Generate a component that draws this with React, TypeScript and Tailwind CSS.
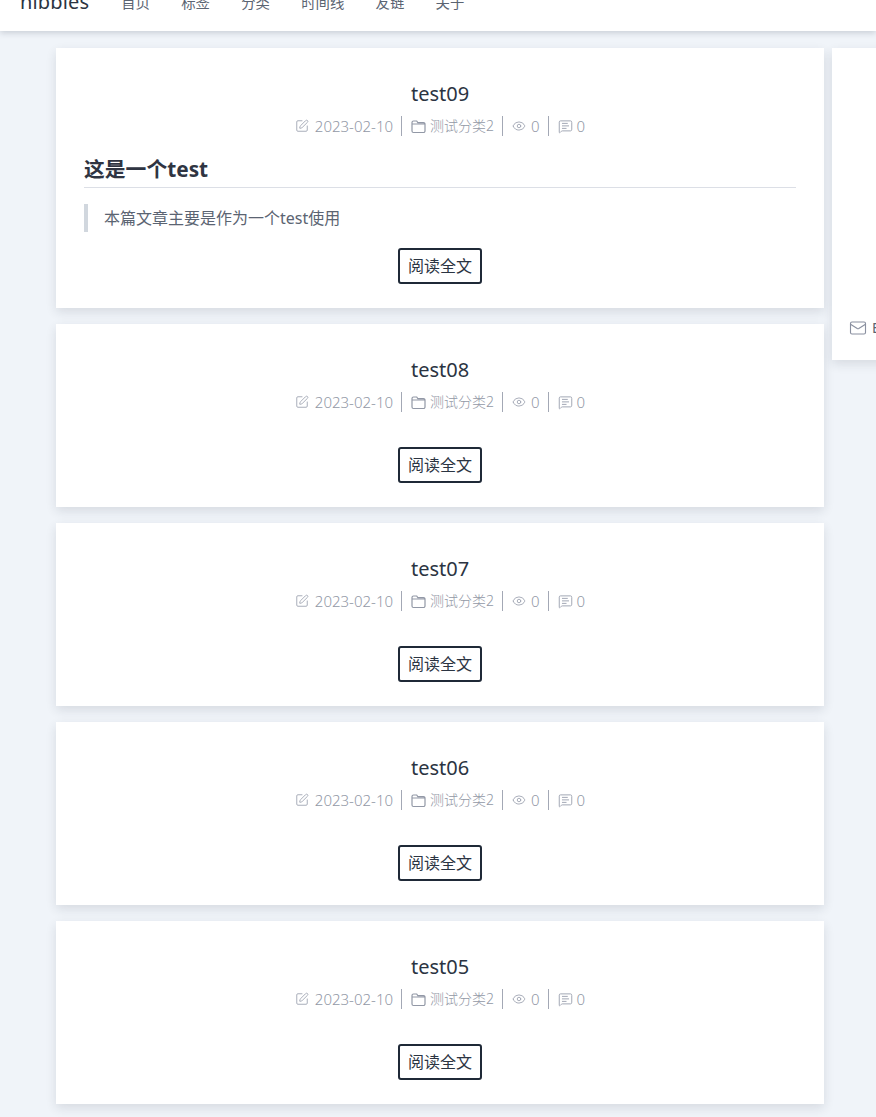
import type { ReactNode } from 'react'
import { Eye, Mail, MessageSquareText, SquarePen } from 'lucide-react'

const navItems = ['首页', '标签', '分类', '时间线', '友链', '关于']

const fontStack = "font-['Noto_Sans','Noto_Sans_CJK_SC',sans-serif]"

function FolderIcon() {
  return (
    <svg width="15" height="15" viewBox="0 0 15 15" fill="none" stroke="currentColor" strokeWidth="1.2">
      <path d="M1 3.5A1.5 1.5 0 0 1 2.5 2h3.2l1.1 1.6h5.7A1.5 1.5 0 0 1 14 5.1v6.9a1.5 1.5 0 0 1-1.5 1.5h-10A1.5 1.5 0 0 1 1 12zM1 5h13" />
    </svg>
  )
}

function PostMeta() {
  return (
    <div className="mt-[8px] flex h-5 items-center justify-center text-[15px] leading-5 font-light text-[#9298a6]">
      <div className="flex h-5 items-center gap-[6px] pr-[8px]">
        <SquarePen size={14} strokeWidth={1.6} className="text-[#a3a8b5]" />
        <span>2023-02-10</span>
      </div>
      <div className="flex h-5 items-center gap-[4px] border-l border-[#a3a8b5] pr-[8px] pl-[9px]">
        <FolderIcon />
        <span className="text-[14px]">测试分类2</span>
      </div>
      <div className="flex h-5 items-center gap-[5px] border-l border-[#a3a8b5] pr-[8px] pl-[9px]">
        <Eye size={14} strokeWidth={1.6} className="text-[#a3a8b5]" />
        <span>0</span>
      </div>
      <div className="flex h-5 items-center gap-[4px] border-l border-[#a3a8b5] pl-[9px]">
        <MessageSquareText size={15} strokeWidth={1.6} className="text-[#a3a8b5]" />
        <span>0</span>
      </div>
    </div>
  )
}

function PostCard({ title, children }: { title: string; children?: ReactNode }) {
  return (
    <article className="bg-white px-7 pt-[32px] pb-6 shadow-[0_4px_10px_rgba(30,41,59,0.12)]">
      <h2 className="text-center text-[20px] leading-7 text-[#2b3442]">{title}</h2>
      <PostMeta />
      {children ?? <div className="h-[35px]" />}
      <div className="flex justify-center">
        <button
          type="button"
          className="flex h-9 w-[84px] items-center justify-center rounded-[3px] border-2 border-[#1f2937] text-[16px] text-[#2b3442]"
        >
          阅读全文
        </button>
      </div>
    </article>
  )
}

export default function App() {
  return (
    <div className={`h-[1117px] overflow-hidden bg-[#f0f4f9] ${fontStack}`}>
      <header className="relative z-10 flex h-[31px] items-end overflow-hidden bg-white pb-[15px] pl-5 shadow-[0_2px_6px_rgba(30,41,59,0.18)]">
        <span className="text-[20px] leading-7 tracking-[0.15px] text-[#2b3442]">nibbles</span>
        <nav className="mb-[1px] ml-[32px] flex gap-[31.2px] text-[14.4px] leading-6 text-[#5b6472]">
          {navItems.map((item) => (
            <a key={item}>{item}</a>
          ))}
        </nav>
      </header>

      <div className="mt-[17px] flex items-start gap-2 pl-14">
        <main className="flex w-[768px] shrink-0 flex-col gap-4">
          <PostCard title="test09">
            <h3 className="mt-[17px] border-b border-[#dcdfe6] pb-[2px] text-[20.8px] leading-8 font-bold text-[#2f3542]">
              这是一个test
            </h3>
            <blockquote className="mt-4 mb-4 border-l-4 border-[#d1d7de] pl-4 text-[16px] leading-7 text-[#5b6472]">
              本篇文章主要是作为一个test使用
            </blockquote>
          </PostCard>
          <PostCard title="test08" />
          <PostCard title="test07" />
          <PostCard title="test06" />
          <PostCard title="test05" />
        </main>

        <aside className="flex h-[312px] w-[240px] shrink-0 items-end bg-white pb-[22px] pl-[17px] shadow-[0_4px_10px_rgba(30,41,59,0.12)]">
          <div className="flex items-center gap-[5px] text-[14px] text-[#5b6472]">
            <Mail size={18} strokeWidth={1.5} className="text-[#8a90a0]" />
            <span>E-mail</span>
          </div>
        </aside>
      </div>
    </div>
  )
}
